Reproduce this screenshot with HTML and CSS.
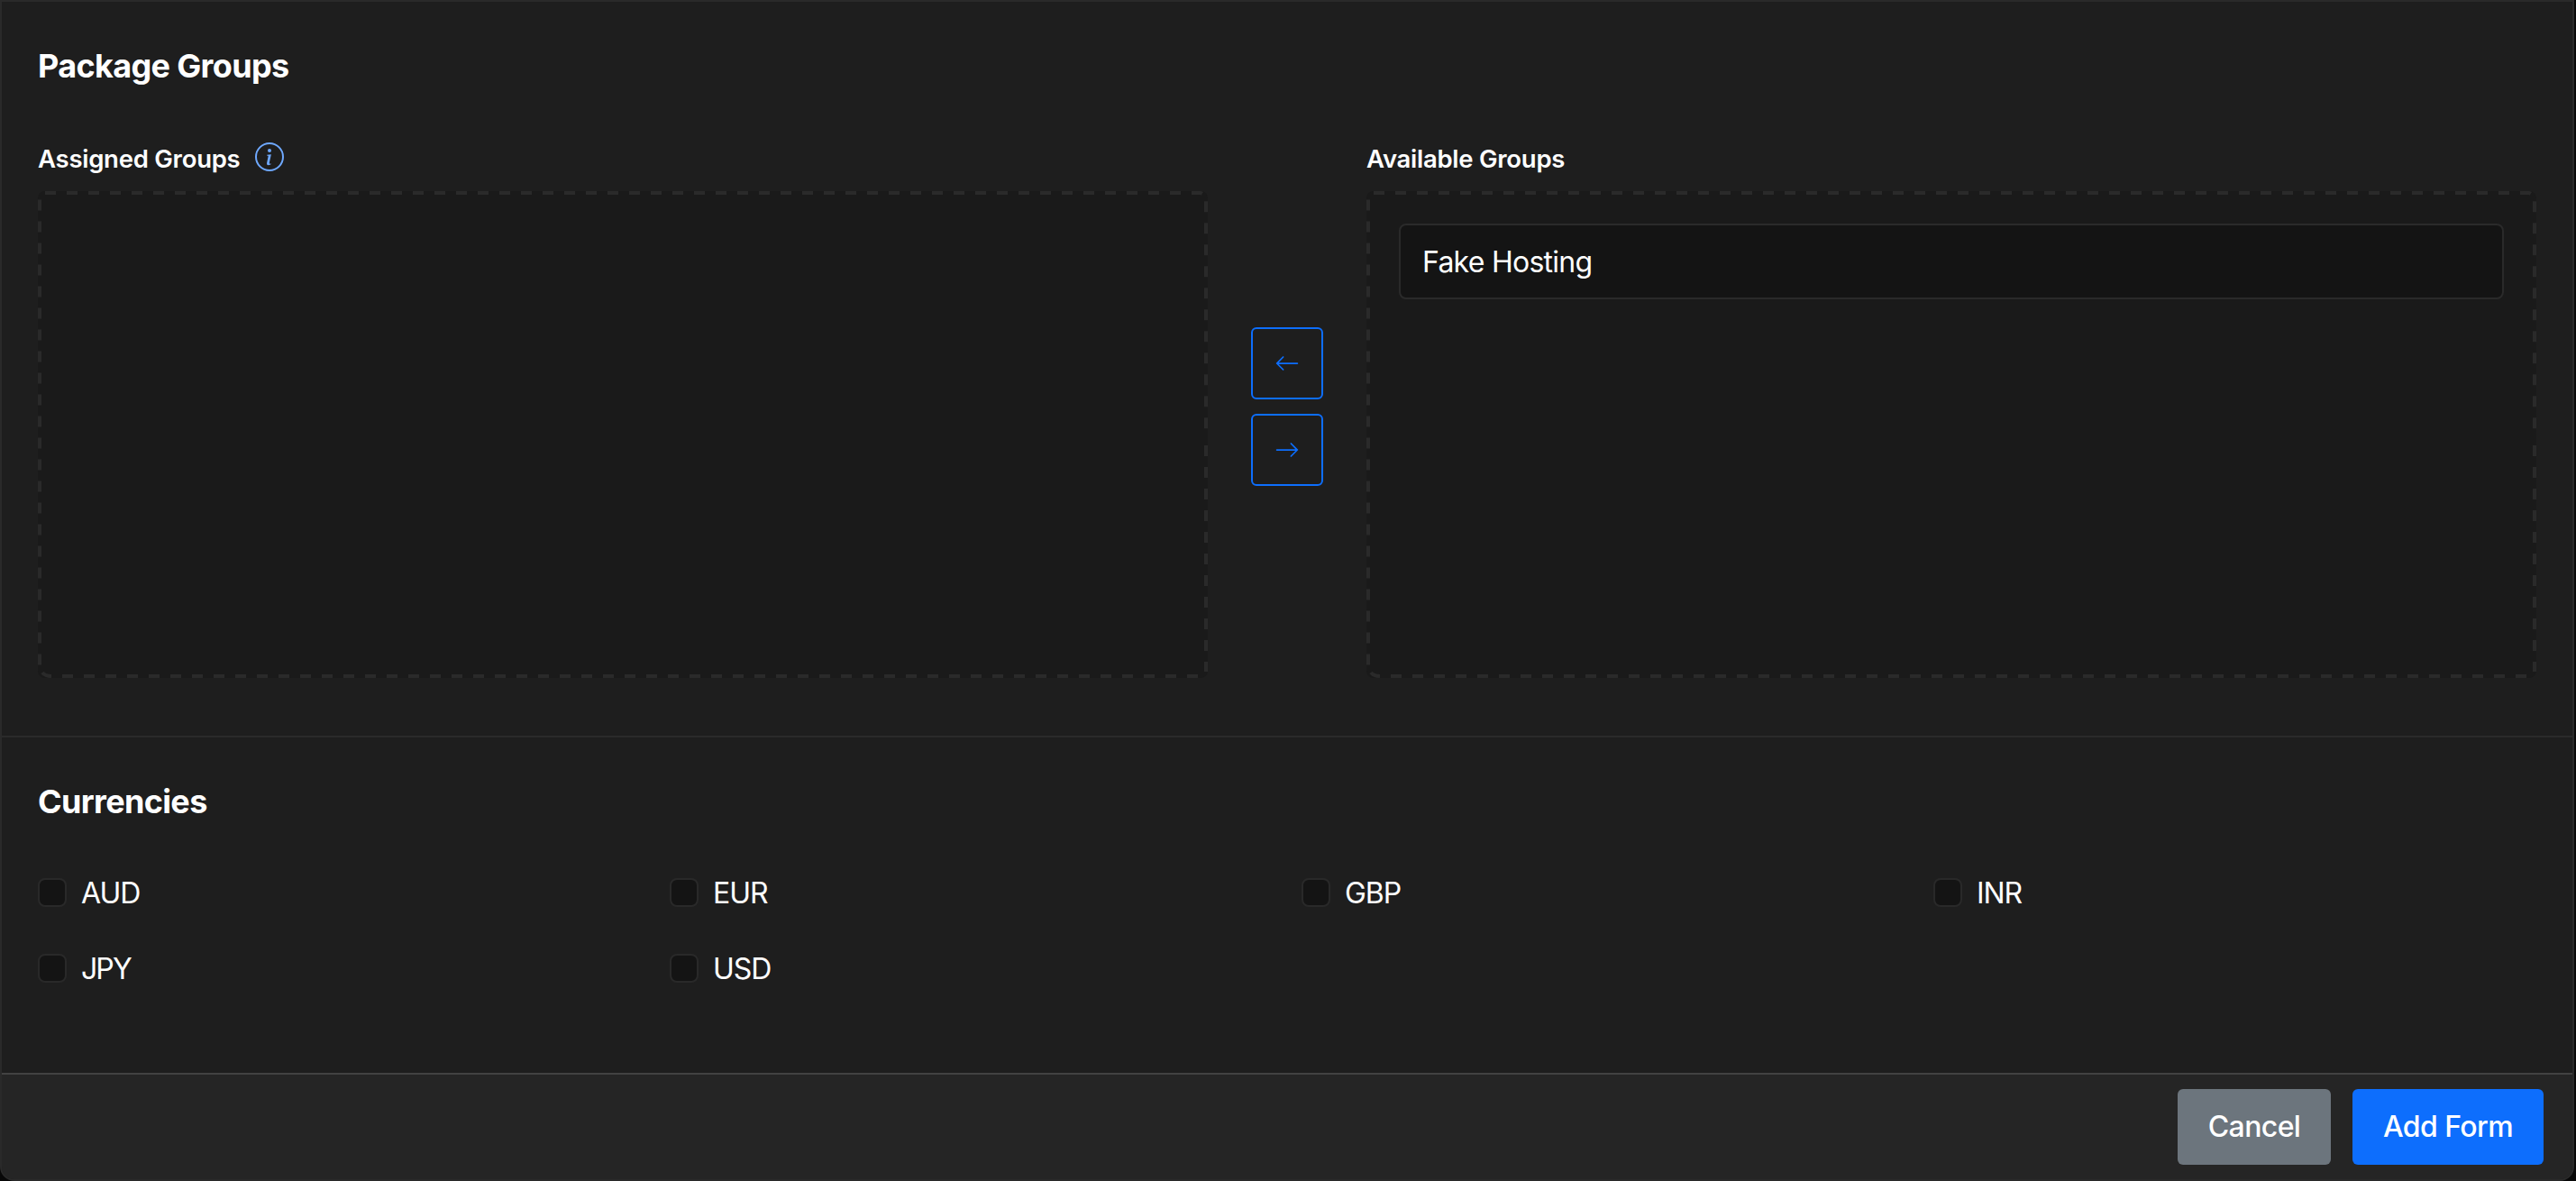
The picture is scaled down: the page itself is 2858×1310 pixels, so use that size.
FILE: index.html
```html
<!DOCTYPE html>
<html lang="en">
<head>
<meta charset="utf-8">
<title>Add Form</title>
<link rel="stylesheet" href="styles.css">
</head>
<body>
<form class="card">
  <section class="section">
    <h2 class="title">Package Groups</h2>
    <div class="transfer">
      <div class="column">
        <div class="label">Assigned Groups
          <svg class="info" viewBox="0 0 16 16" fill="currentColor"><path d="M8 15A7 7 0 1 1 8 1a7 7 0 0 1 0 14m0 1A8 8 0 1 0 8 0a8 8 0 0 0 0 16"/><path d="m8.930 6.588-2.290.287-.082.380.450.083c.294.070.352.176.288.469l-.738 3.468c-.194.897.105 1.319.808 1.319.545 0 1.178-.252 1.465-.598l.088-.416c-.200.176-.492.246-.686.246-.275 0-.375-.193-.304-.533zM9 4.500a1 1 0 1 1-2 0 1 1 0 0 1 2 0"/></svg>
        </div>
        <div class="dropzone">
          <svg class="dashes" viewBox="0 0 1298 540"><path d="M8 2H1290A6 6 0 0 1 1294 5"/><path d="M1296 11.300V264"/><path d="M1296 282V533"/><path d="M1287 538H26"/><path d="M15 538Q8 538 5 534"/><path d="M2 525.500V8"/></svg>
        </div>
      </div>
      <div class="movers">
        <button type="button" class="mover" aria-label="Assign"><svg viewBox="0 0 16 16" fill="currentColor"><path d="M15 8a.5.5 0 0 0-.5-.5H2.707l3.147-3.146a.5.5 0 1 0-.708-.708l-4 4a.5.5 0 0 0 0 .708l4 4a.5.5 0 0 0 .708-.708L2.707 8.500H14.500A.5.5 0 0 0 15 8"/></svg></button>
        <button type="button" class="mover" aria-label="Unassign"><svg viewBox="0 0 16 16" fill="currentColor"><path d="M1 8a.5.5 0 0 1 .5-.5h11.793l-3.147-3.146a.5.5 0 0 1 .708-.708l4 4a.5.5 0 0 1 0 .708l-4 4a.5.5 0 0 1-.708-.708L13.293 8.500H1.500A.5.5 0 0 1 1 8"/></svg></button>
      </div>
      <div class="column">
        <div class="label">Available Groups</div>
        <div class="dropzone">
          <svg class="dashes" viewBox="0 0 1298 540"><path d="M8 2H1290A6 6 0 0 1 1294 5"/><path d="M1296 11.300V264"/><path d="M1296 282V533"/><path d="M1287 538H26"/><path d="M15 538Q8 538 5 534"/><path d="M2 525.500V8"/></svg>
          <div class="item">Fake Hosting</div>
        </div>
      </div>
    </div>
  </section>
  <section class="section section-currencies">
    <h2 class="title">Currencies</h2>
    <div class="currencies">
      <label class="check"><input type="checkbox" class="box">AUD</label>
      <label class="check"><input type="checkbox" class="box">EUR</label>
      <label class="check"><input type="checkbox" class="box">GBP</label>
      <label class="check"><input type="checkbox" class="box">INR</label>
      <label class="check check-tight"><input type="checkbox" class="box">JPY</label>
      <label class="check"><input type="checkbox" class="box">USD</label>
    </div>
  </section>
  <footer class="footer">
    <button type="button" class="btn btn-cancel">Cancel</button>
    <button type="button" class="btn btn-add">Add Form</button>
  </footer>
</form>
</body>
</html>
```
FILE: styles.css
```css
* {
  box-sizing: border-box;
}

body {
  margin: 0;
  background: #080808;
  color: #fff;
  font-family: Inter, "Liberation Sans", sans-serif;
}

.card {
  display: flex;
  flex-direction: column;
  width: 2856px;
  height: 1310px;
  border: 2px solid #2a2a2a;
  border-radius: 0 0 16px 16px;
  background: #1e1e1e;
  overflow: hidden;
}

.section {
  padding: 49px 40px 64px;
  border-bottom: 2px solid #2a2a2a;
}

.section-currencies {
  flex: 1;
  padding-bottom: 0;
  border-bottom: 0;
}

.title {
  margin: 0;
  font-size: 36px;
  font-weight: 700;
  line-height: 44px;
  letter-spacing: -0.65px;
}

.transfer {
  display: grid;
  grid-template-columns: 1fr 176px 1fr;
  margin-top: 60px;
}

.label {
  display: flex;
  gap: 17px;
  height: 42px;
  margin-bottom: 15px;
  font-size: 27.5px;
  font-weight: 600;
  line-height: 42px;
  letter-spacing: -0.26px;
}

.info {
  width: 32px;
  height: 32px;
  margin-top: 3px;
  color: #6ea8fe;
}

.dropzone {
  position: relative;
  height: 540px;
  padding: 36px;
  border-radius: 8px;
  background: #1a1a1a;
}

.dashes {
  position: absolute;
  inset: 0;
  width: 100%;
  height: 100%;
  fill: none;
  stroke: #2a2a2a;
  stroke-width: 4;
  stroke-dasharray: 12 12;
}

.item {
  height: 84px;
  padding: 0 24px;
  border: 2px solid #2a2a2a;
  border-radius: 8px;
  background: #141414;
  font-size: 32px;
  line-height: 81px;
  letter-spacing: -0.73px;
}

.movers {
  display: flex;
  flex-direction: column;
  align-items: center;
  gap: 16px;
  padding-top: 208px;
}

.mover {
  display: flex;
  align-items: center;
  justify-content: center;
  width: 80px;
  height: 80px;
  padding: 0;
  border: 2px solid #0d6efd;
  border-radius: 6px;
  background: none;
  color: #0d6efd;
}

.mover svg {
  width: 28px;
  height: 28px;
}

.currencies {
  display: grid;
  grid-template-columns: repeat(4, 1fr);
  gap: 36px 32px;
  margin-top: 55px;
}

.check {
  display: flex;
  align-items: center;
  gap: 16px;
  height: 48px;
  font-size: 32px;
  line-height: 49px;
  letter-spacing: -1.05px;
}

.check-tight {
  letter-spacing: -1.9px;
}

.box {
  appearance: none;
  width: 32px;
  height: 32px;
  margin: 0;
  border: 2px solid #292929;
  border-radius: 8px;
  background: #141414;
}

.footer {
  display: flex;
  justify-content: flex-end;
  gap: 24px;
  height: 118px;
  padding: 16px 32px;
  border-top: 2px solid #424242;
  background: #252525;
}

.btn {
  height: 84px;
  padding: 0;
  border: 0;
  border-radius: 6px;
  color: #fff;
  font-family: inherit;
  font-size: 32px;
  font-weight: 500;
  line-height: 84px;
  letter-spacing: -0.6px;
}

.btn-cancel {
  width: 170px;
  background: #6c757d;
}

.btn-add {
  width: 212px;
  background: #0d6efd;
}
```
